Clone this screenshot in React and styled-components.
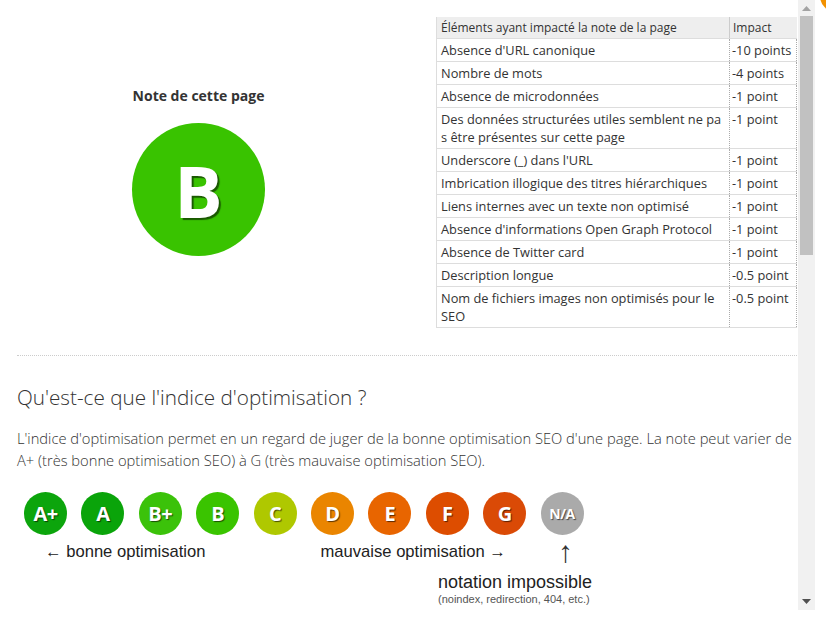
import React from 'react';
import styled, { createGlobalStyle } from 'styled-components';

const GlobalStyle = createGlobalStyle`
  html, body {
    margin: 0;
    padding: 0;
    background: #fff;
  }
  body {
    font-family: 'Open Sans', 'Liberation Sans', Arial, sans-serif;
    color: #333;
  }
`;

const Page = styled.div`
  position: relative;
  width: 826px;
  height: 626px;
  overflow: hidden;
  background: #fff;
`;

const CloseButton = styled.div`
  position: absolute;
  left: 820px;
  top: -20px;
  width: 32px;
  height: 32px;
  border-radius: 50%;
  background: #f29100;
`;

const Viewport = styled.div`
  display: flex;
  width: 815px;
  height: 610px;
`;

const Content = styled.div`
  flex: 1;
  overflow: hidden;
  padding: 17px 0 0 17px;
`;

const Scrollbar = styled.div`
  width: 17px;
  height: 610px;
  background: #f1f1f1;
  display: flex;
  flex-direction: column;
  align-items: center;
`;

const ScrollArrow = styled.div`
  height: 17px;
  width: 17px;
  display: flex;
  align-items: center;
  justify-content: center;
  svg {
    display: block;
  }
`;

const ScrollThumb = styled.div`
  width: 13px;
  height: 239px;
  background: #c1c1c1;
  margin-top: -1px;
`;

const ScrollSpacer = styled.div`
  flex: 1;
`;

const TopSection = styled.div`
  display: flex;
  align-items: center;
  justify-content: space-between;
  width: 781px;
`;

const ScoreBlock = styled.div`
  width: 363px;
  display: flex;
  flex-direction: column;
  align-items: center;
  gap: 18px;
`;

const ScoreTitle = styled.div`
  font-size: 14px;
  font-weight: 700;
  line-height: 19px;
  color: #333;
  margin-top: -4px;
`;

const BigGrade = styled.div`
  width: 133px;
  height: 133px;
  border-radius: 50%;
  background: #39c300;
  display: flex;
  align-items: center;
  justify-content: center;
  color: #fff;
  font-size: 72px;
  font-weight: 700;
  line-height: 1;
  text-shadow: 2px 2px 1px rgba(0, 0, 0, 0.55);
  padding-top: 2px;
  box-sizing: border-box;
`;

const ImpactTable = styled.table`
  width: 361px;
  border-collapse: collapse;
  font-size: 12.8px;
  line-height: 18px;
  color: #333;
  margin-right: 1px;

  th {
    background: #eee;
    font-weight: 400;
    text-align: left;
    font-size: 12px;
    height: 21px;
    padding: 0 4px;
    border-left: 1px solid #ddd;
    border-bottom: 1px solid #ddd;
  }
  th + th {
    border-left: 1px solid #ccc;
    padding: 0 3px;
  }

  td {
    padding: 2px 4px;
    vertical-align: top;
    border-left: 1px solid #ddd;
    border-bottom: 1px solid #ddd;
    word-break: break-all;
  }
  td + td {
    border-left: 1px dotted #aaa;
    border-right: 1px dotted #aaa;
    padding: 2px 2px;
    white-space: nowrap;
    width: 62px;
    word-break: normal;
  }
`;

const NoBreak = styled.span`
  white-space: nowrap;
`;

const Separator = styled.hr`
  width: 780px;
  margin: 27px 0 0 0;
  border: 0;
  border-top: 1px dotted #ccc;
`;

const Heading = styled.h2`
  margin: 28px 0 0 0;
  font-size: 20.7px;
  font-weight: 300;
  line-height: 26px;
  color: #333;
`;

const Intro = styled.p`
  margin: 17px 0 0 0;
  width: 781px;
  font-size: 14.7px;
  font-weight: 300;
  line-height: 22px;
  color: #333;
`;

const GradeRow = styled.div`
  display: flex;
  gap: 14.4px;
  margin: 21px 0 0 7px;
`;

const Grade = styled.div`
  width: 43px;
  height: 43px;
  border-radius: 50%;
  background: ${(p) => p.$bg};
  color: #fff;
  display: flex;
  align-items: center;
  justify-content: center;
  font-size: ${(p) => (p.$small ? '14px' : '20px')};
  font-weight: 700;
  letter-spacing: -0.5px;
  text-shadow: 1px 1px 1px rgba(0, 0, 0, 0.6);
`;

const Legend = styled.div`
  font-family: 'Liberation Sans', Arial, sans-serif;
  color: #222;
`;

const LegendRow = styled.div`
  display: flex;
  align-items: flex-start;
  margin-top: 6px;
  height: 26px;
`;

const LegendText = styled.div`
  font-size: 16.6px;
  line-height: 22px;
  margin-left: ${(p) => p.$offset}px;
  white-space: nowrap;
`;

const UpArrow = styled.div`
  font-size: 30px;
  line-height: 24px;
  color: #333;
  margin-left: ${(p) => p.$offset}px;
  margin-top: -1px;
`;

const Impossible = styled.div`
  margin: 5px 0 0 421px;
  display: flex;
  flex-direction: column;
`;

const ImpossibleTitle = styled.div`
  font-size: 18px;
  line-height: 21px;
`;

const ImpossibleNote = styled.div`
  font-size: 11px;
  line-height: 13px;
  color: #555;
`;

const rows = [
  ["Absence d'URL canonique", '-10 points'],
  ['Nombre de mots', '-4 points'],
  ['Absence de microdonnées', '-1 point'],
  ['Des données structurées utiles semblent ne pas être présentes sur cette page', '-1 point'],
  ["Underscore (_) dans l'URL", '-1 point'],
  ['Imbrication illogique des titres hiérarchiques', '-1 point'],
  ['Liens internes avec un texte non optimisé', '-1 point'],
  ["Absence d'informations Open Graph Protocol", '-1 point'],
  ['Absence de Twitter card', '-1 point'],
  ['Description longue', '-0.5 point'],
  ['Nom de fichiers images non optimisés pour le ', '-0.5 point', 'SEO'],
];

const grades = [
  { label: 'A+', bg: '#0ca50c' },
  { label: 'A', bg: '#0aa40a' },
  { label: 'B+', bg: '#3bc20a' },
  { label: 'B', bg: '#3ac400' },
  { label: 'C', bg: '#afc800' },
  { label: 'D', bg: '#ea8500' },
  { label: 'E', bg: '#e86500' },
  { label: 'F', bg: '#dd4d00' },
  { label: 'G', bg: '#da4a06' },
  { label: 'N/A', bg: '#aaaaaa', small: true },
];

export default function App() {
  return (
    <Page>
      <GlobalStyle />
      <Viewport>
        <Content>
          <TopSection>
            <ScoreBlock>
              <ScoreTitle>Note de cette page</ScoreTitle>
              <BigGrade>B</BigGrade>
            </ScoreBlock>
            <ImpactTable>
              <thead>
                <tr>
                  <th>Éléments ayant impacté la note de la page</th>
                  <th>Impact</th>
                </tr>
              </thead>
              <tbody>
                {rows.map(([label, impact, tail]) => (
                  <tr key={label}>
                    <td>
                      {label}
                      {tail && <NoBreak>{tail}</NoBreak>}
                    </td>
                    <td>{impact}</td>
                  </tr>
                ))}
              </tbody>
            </ImpactTable>
          </TopSection>

          <Separator />

          <Heading>Qu'est-ce que l'indice d'optimisation ?</Heading>
          <Intro>
            L'indice d'optimisation permet en un regard de juger de la bonne optimisation SEO d'une
            page. La note peut varier de A+ (très bonne optimisation SEO) à G (très mauvaise
            optimisation SEO).
          </Intro>

          <GradeRow>
            {grades.map((g) => (
              <Grade key={g.label} $bg={g.bg} $small={g.small}>
                {g.label}
              </Grade>
            ))}
          </GradeRow>

          <Legend>
            <LegendRow>
              <LegendText $offset={28}>← bonne optimisation</LegendText>
              <LegendText $offset={115}>mauvaise optimisation →</LegendText>
              <UpArrow $offset={52}>↑</UpArrow>
            </LegendRow>
            <Impossible>
              <ImpossibleTitle>notation impossible</ImpossibleTitle>
              <ImpossibleNote>(noindex, redirection, 404, etc.)</ImpossibleNote>
            </Impossible>
          </Legend>
        </Content>

        <Scrollbar>
          <ScrollArrow>
            <svg width="9" height="5" viewBox="0 0 9 5">
              <path d="M0 5 L4.5 0 L9 5 Z" fill="#a3a3a3" />
            </svg>
          </ScrollArrow>
          <ScrollThumb />
          <ScrollSpacer />
          <ScrollArrow>
            <svg width="9" height="5" viewBox="0 0 9 5">
              <path d="M0 0 L4.5 5 L9 0 Z" fill="#505050" />
            </svg>
          </ScrollArrow>
        </Scrollbar>
      </Viewport>
      <CloseButton />
    </Page>
  );
}
